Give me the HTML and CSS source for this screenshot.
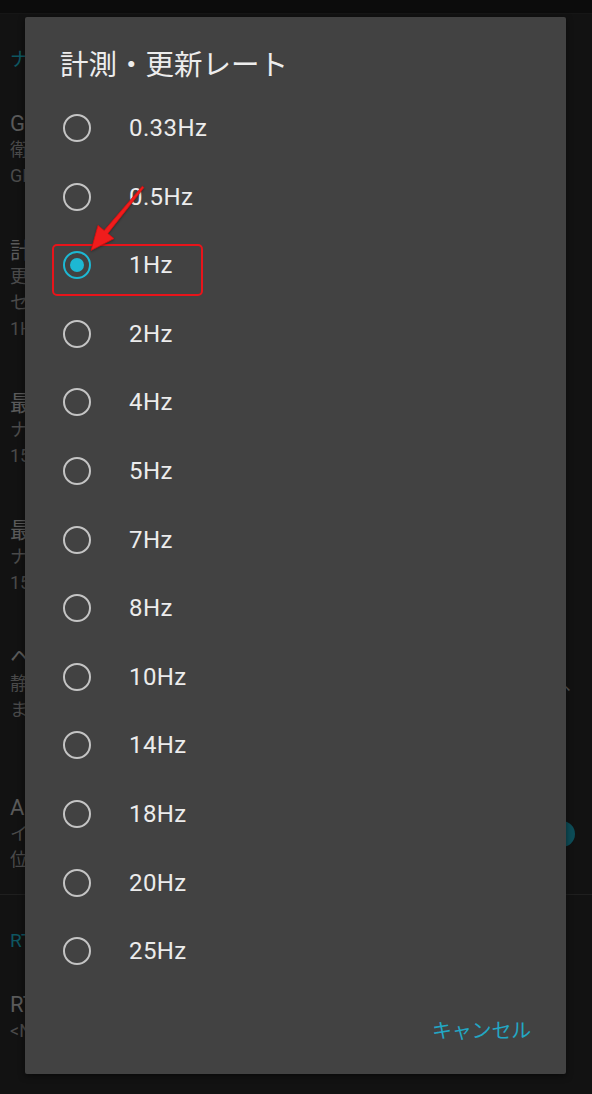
FILE: index.html
```html
<!DOCTYPE html>
<html lang="ja">
<head>
<meta charset="utf-8">
<title>計測・更新レート</title>
<link rel="stylesheet" href="styles.css">
</head>
<body>
<div class="screen">
  <div class="appbar"></div>
  <div class="settings">
    <div class="cat">ナビゲーション</div>
    <div class="item">
      <div class="t">GNSS</div>
      <div class="s">衛星システムの選択</div>
      <div class="s">GPS, GLONASS, Galileo</div>
    </div>
    <div class="item">
      <div class="t">計測・更新レート</div>
      <div class="s">更新間隔を設定します。</div>
      <div class="s">センサーの対応状況により異なります</div>
      <div class="s">1Hz</div>
    </div>
    <div class="item">
      <div class="t">最大速度</div>
      <div class="s">ナビゲーションの最大速度</div>
      <div class="s">15 m/s</div>
    </div>
    <div class="item">
      <div class="t">最小速度</div>
      <div class="s">ナビゲーションの最小速度</div>
      <div class="s">15 m/s</div>
    </div>
    <div class="item item-tall">
      <div class="t">ヘディング</div>
      <div class="s">静止時のヘディングを保持します<span class="tail">、</span></div>
      <div class="s">ます</div>
    </div>
    <div class="item item-last">
      <div class="row-tog">
        <div class="texts">
          <div class="t">Auto</div>
          <div class="s">イベント記録</div>
          <div class="s">位置情報を自動で保存</div>
        </div>
        <div class="toggle"><span class="thumb"></span></div>
      </div>
    </div>
    <div class="divider"></div>
    <div class="cat">RTK</div>
    <div class="item">
      <div class="t">RTKプロファイル</div>
      <div class="s">&lt;None&gt;</div>
    </div>
  </div>

  <div class="dialog">
    <div class="d-title">計測・更新レート</div>
    <div class="options">
      <div class="opt"><span class="radio"></span><span class="lbl">0.33Hz</span></div>
      <div class="opt"><span class="radio"></span><span class="lbl">0.5Hz</span></div>
      <div class="opt opt-mark"><span class="radio on"></span><span class="lbl">1Hz</span><span class="redbox"></span></div>
      <div class="opt"><span class="radio"></span><span class="lbl">2Hz</span></div>
      <div class="opt"><span class="radio"></span><span class="lbl">4Hz</span></div>
      <div class="opt"><span class="radio"></span><span class="lbl">5Hz</span></div>
      <div class="opt"><span class="radio"></span><span class="lbl">7Hz</span></div>
      <div class="opt"><span class="radio"></span><span class="lbl">8Hz</span></div>
      <div class="opt"><span class="radio"></span><span class="lbl">10Hz</span></div>
      <div class="opt"><span class="radio"></span><span class="lbl">14Hz</span></div>
      <div class="opt"><span class="radio"></span><span class="lbl">18Hz</span></div>
      <div class="opt"><span class="radio"></span><span class="lbl">20Hz</span></div>
      <div class="opt"><span class="radio"></span><span class="lbl">25Hz</span></div>
    </div>
    <div class="actions"><span class="btn">キャンセル</span></div>
  </div>

  <svg class="arrow" width="592" height="1094" viewBox="0 0 592 1094">
    <polygon points="143.9,187.6 107.8,233.5 114,238.6 91,250.5 98,225.4 104.2,230.5 142.3,186.2" fill="#f01c1c" stroke="#d80f0f" stroke-width="0.8" stroke-linejoin="round"/>
  </svg>
</div>
</body>
</html>
```

FILE: styles.css
```css
* { box-sizing: border-box; }
html, body { margin: 0; padding: 0; }
body {
  background: #121212;
  font-family: Roboto, "Noto Sans CJK JP", sans-serif;
  width: 592px;
  height: 1094px;
  overflow: hidden;
}
.screen {
  position: relative;
  width: 592px;
  height: 1094px;
  background: #121212;
  overflow: hidden;
}
.appbar {
  height: 14px;
  background: #0c0c0c;
  border-bottom: 1px solid #161616;
}
.settings {
  display: flex;
  flex-direction: column;
}
.cat {
  padding: 33px 10px 14px;
  line-height: 26px;
  font-size: 19px;
  color: #0e5661;
  white-space: nowrap;
}
.item {
  padding: 24px 10px 25px;
  white-space: nowrap;
}
.item-tall { padding-bottom: 48px; }
.item-last { padding-bottom: 21px; }
.t {
  font-size: 22px;
  line-height: 26px;
  color: #5a5a5a;
}
.s {
  font-size: 18px;
  line-height: 26px;
  color: #4a4a4a;
}
.tail {
  display: inline-block;
  margin-left: 285px;
  color: #555;
}
.row-tog {
  display: flex;
  align-items: center;
  justify-content: space-between;
}
.toggle {
  position: relative;
  width: 40px;
  height: 16px;
  margin-right: 12px;
  border-radius: 8px;
  background: #0a3840;
}
.thumb {
  position: absolute;
  right: -5px;
  top: -5px;
  width: 26px;
  height: 26px;
  border-radius: 50%;
  background: #0d4c57;
}
.divider {
  height: 1px;
  background: #1f1f1f;
}

/* dialog */
.dialog {
  position: absolute;
  left: 25px;
  top: 17px;
  width: 541px;
  height: 1057px;
  background: #424242;
  border-radius: 2px;
  box-shadow: 0 2px 6px rgba(0,0,0,0.5);
  display: flex;
  flex-direction: column;
}
.d-title {
  padding: 28px 0 0 35px;
  font-family: "Noto Sans CJK JP", sans-serif;
  font-size: 28.5px;
  line-height: 36px;
  color: #ededed;
}
.options {
  margin-top: 12.7px;
  display: flex;
  flex-direction: column;
}
.opt {
  position: relative;
  height: 68.6px;
  display: flex;
  align-items: center;
  padding-left: 38px;
}
.radio {
  width: 28px;
  height: 28px;
  border-radius: 50%;
  border: 2.6px solid #c4c4c4;
  flex: none;
  position: relative;
}
.radio.on { border-color: #1db8d3; }
.radio.on::after {
  content: "";
  position: absolute;
  left: 50%;
  top: 50%;
  width: 14px;
  height: 14px;
  margin: -7px 0 0 -7px;
  border-radius: 50%;
  background: #1db8d3;
}
.lbl {
  margin-left: 38px;
  font-size: 24px;
  color: #ececec;
  letter-spacing: 0.4px;
}
.redbox {
  position: absolute;
  left: 27px;
  top: 13px;
  width: 151px;
  height: 52px;
  border: 2px solid #e8141a;
  border-radius: 5px;
}
.actions {
  flex: 1;
  display: flex;
  justify-content: flex-end;
  align-items: center;
  padding: 0 35px 0 0;
}
.btn {
  font-family: "Noto Sans CJK JP", sans-serif;
  font-size: 20px;
  color: #22a7c4;
  letter-spacing: -0.2px;
}
.arrow {
  position: absolute;
  left: 0;
  top: 0;
  pointer-events: none;
  filter: drop-shadow(0 1px 1px rgba(0,0,0,0.35));
}
```
